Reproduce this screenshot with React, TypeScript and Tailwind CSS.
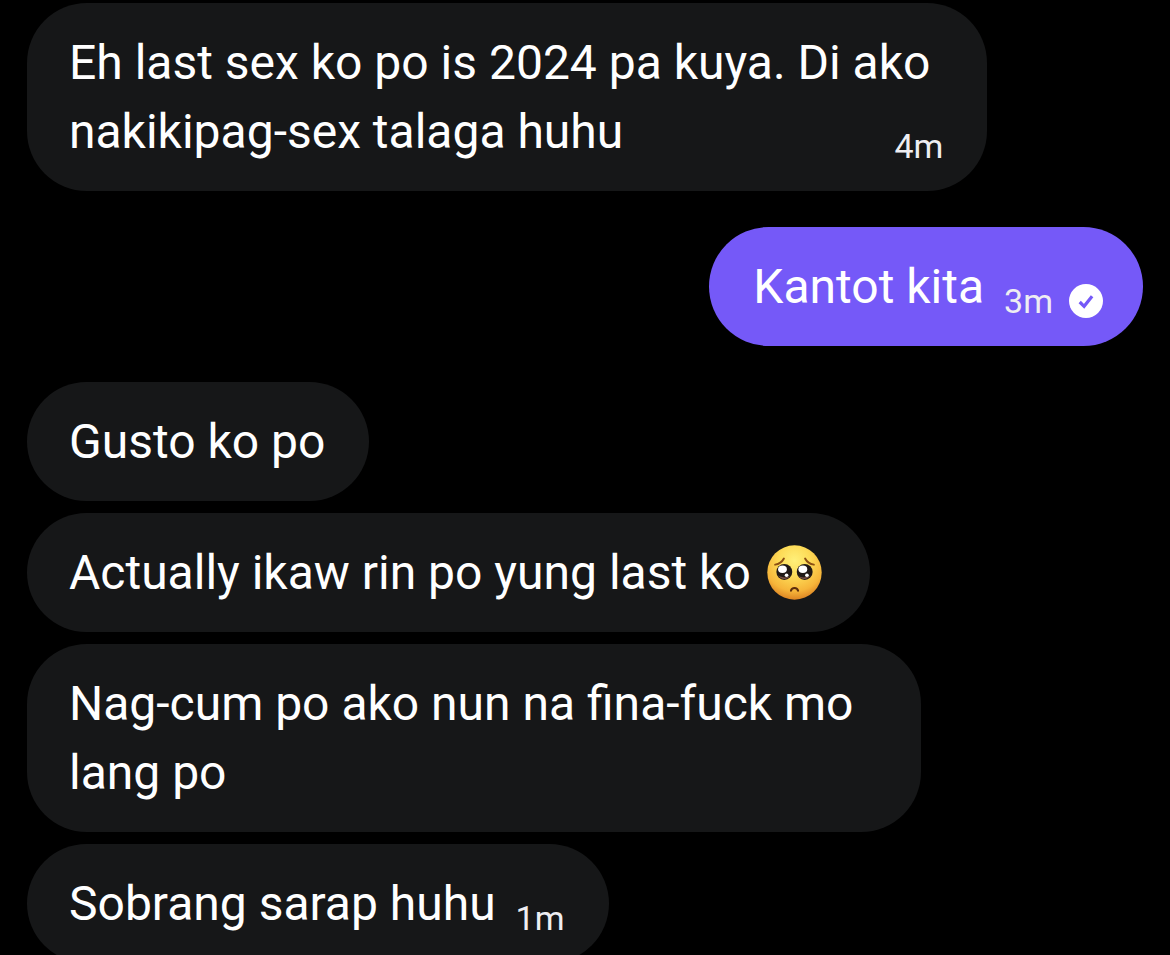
import type { ReactNode } from "react";

function PleadingFace() {
  return (
    <svg viewBox="0 0 54 54" role="img" aria-label="Pleading face" className="-mt-2 mr-1 ml-1 inline-block size-[55px] align-middle">
      <defs>
        <radialGradient id="face" cx="50%" cy="28%" r="72%">
          <stop offset="0" stopColor="#fff07a" />
          <stop offset="0.4" stopColor="#fddb57" />
          <stop offset="0.78" stopColor="#f6b53a" />
          <stop offset="1" stopColor="#dc8423" />
        </radialGradient>
      </defs>
      <circle cx="27" cy="27" r="26.7" fill="url(#face)" />
      <g fill="none" stroke="#8c4f12" strokeLinecap="round" strokeWidth="1.9">
        <path d="M8 19.300c4-.5 6.800-2.600 8.600-6" />
        <path d="M46 19.300c-4-.5-6.800-2.600-8.600-6" />
      </g>
      <circle cx="17" cy="26.500" r="7.800" fill="#201916" />
      <circle cx="37" cy="26.500" r="7.800" fill="#201916" />
      <path d="M10.600 29.800c2.600 4.400 8.800 4.800 12 1-3.500 1.600-8.500 1.300-12-1Z" fill="#795044" />
      <path d="M30.800 30.800c3.200 3.800 9.400 3.400 12-1-3.500 2.300-8.500 2.600-12 1Z" fill="#795044" />
      <g fill="#fff">
        <ellipse cx="15.200" cy="23.800" rx="4.300" ry="3.700" />
        <ellipse cx="35.200" cy="23.800" rx="4.300" ry="3.700" />
        <circle cx="19.200" cy="29.700" r="1.800" />
        <circle cx="39.200" cy="29.700" r="1.800" />
      </g>
      <path d="M23.500 45c.8-3.600 6.200-3.600 7 0" fill="none" stroke="#5b2c0c" strokeLinecap="round" strokeWidth="2" />
    </svg>
  );
}

function SentMark() {
  return (
    <svg viewBox="0 0 34 34" role="img" aria-label="Sent" className="size-[34px]">
      <circle cx="17" cy="17" r="17" fill="#fff" />
      <path d="m10.700 18 4.400 4.300 8-10.100" fill="none" stroke="#7559f8" strokeWidth="3.200" />
    </svg>
  );
}

type MessageProps = { lines: ReactNode[]; time?: string; own?: boolean };

function Message({ lines, time, own = false }: MessageProps) {
  const multiline = lines.length > 1;
  return (
    <li
      className={
        own
          ? "my-6 flex max-w-[88%] shrink-0 items-end gap-5 self-end rounded-[60px] bg-[#7559f8] py-[25px] pr-10 pl-11"
          : "flex max-w-[88%] shrink-0 items-end gap-5 self-start rounded-[60px] bg-[#161718] py-[25px] pr-11 pl-[42px]"
      }
    >
      <div className={multiline ? "pr-6" : ""}>
        {lines.map((line, i) => (
          <p key={i}>{line}</p>
        ))}
      </div>
      {time && (
        <div
          className={
            multiline
              ? "-ml-20 flex shrink-0 items-center text-[34px] leading-10 text-[#eeeef2]"
              : "flex shrink-0 items-center gap-4 text-[34px] leading-10 text-[#eeeef2]"
          }
        >
          <time>{time}</time>
          {own && <SentMark />}
        </div>
      )}
    </li>
  );
}

export default function App() {
  return (
    <main className="h-screen overflow-hidden bg-black font-['Roboto',sans-serif] text-[48px] leading-[69px] text-white">
      <ul className="flex flex-col gap-3 px-[27px] pt-[3px]">
        <Message lines={["Eh last sex ko po is 2024 pa kuya. Di ako", "nakikipag-sex talaga huhu"]} time="4m" />
        <Message lines={["Kantot kita"]} time="3m" own />
        <Message lines={["Gusto ko po"]} />
        <Message lines={[<>Actually ikaw rin po yung last ko <PleadingFace /></>]} />
        <Message lines={["Nag-cum po ako nun na fina-fuck mo", "lang po"]} />
        <Message lines={["Sobrang sarap huhu"]} time="1m" />
      </ul>
    </main>
  );
}
